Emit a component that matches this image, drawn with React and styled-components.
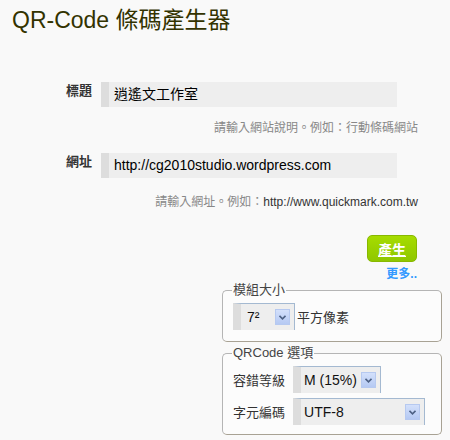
import styled, { createGlobalStyle } from "styled-components";

const GlobalStyle = createGlobalStyle`
  body {
    margin: 0;
    background: #f9f9f9;
    font-family: "Liberation Sans", Arial, "Noto Sans CJK TC", sans-serif;
  }
`;

const Page = styled.div`
  width: 450px;
  height: 440px;
  padding: 6px 8px 0 12px;
  box-sizing: border-box;
  display: flex;
  flex-direction: column;
`;

const Title = styled.h1`
  margin: 0;
  font-size: 23px;
  line-height: 28px;
  font-weight: normal;
  color: #333300;
`;

const Row = styled.div`
  display: flex;
  align-items: flex-start;
  gap: 8px;
  padding-left: 54px;
  margin-top: ${({ $top }) => $top}px;
`;

const Label = styled.label`
  width: 27px;
  font-size: 13px;
  line-height: 18px;
  font-weight: bold;
  color: #333;
`;

const Field = styled.div`
  width: 296px;
  height: 25px;
  box-sizing: border-box;
  background: #eeeeee;
  border-left: 8px solid #dddddd;
  padding-left: 5px;
  font-size: 14px;
  line-height: 25px;
  color: #000;
`;

const Hint = styled.div`
  align-self: flex-end;
  margin-right: 24px;
  margin-top: ${({ $top }) => $top}px;
  font-size: 12px;
  line-height: 16px;
  color: #888;
  span {
    color: #333;
  }
`;

const Actions = styled.div`
  align-self: flex-end;
  margin-right: 25px;
  margin-top: 25px;
  display: flex;
  flex-direction: column;
  align-items: flex-end;
`;

const Button = styled.button`
  width: 50px;
  height: 27px;
  border: 1px solid #88b800;
  border-radius: 5px;
  background: linear-gradient(#a6dc00, #8fc700);
  color: #fff;
  font-family: "Noto Sans CJK TC", sans-serif;
  font-size: 14px;
  font-weight: bold;
  text-decoration: underline;
  padding: 0;
  cursor: pointer;
`;

const More = styled.a`
  margin-top: 5px;
  font-size: 12px;
  line-height: 14px;
  font-weight: bold;
  color: #3399ff;
  text-decoration: none;
`;

const Group = styled.fieldset`
  align-self: flex-end;
  width: 220px;
  box-sizing: border-box;
  margin: ${({ $top }) => $top}px 0 0;
  padding: 5px 9px ${({ $bottom }) => $bottom}px 10px;
  border: 1px solid #b5b5b5;
  border-right-color: #a8a294;
  border-bottom-color: #a8a294;
  border-radius: 5px;
  background: #fcfcfc;
  display: flex;
  flex-direction: column;
  gap: 5px;
`;

const Legend = styled.legend`
  padding: 0 1px;
  margin-left: -1px;
  font-size: 13px;
  line-height: 16px;
  color: #444;
`;

const OptionRow = styled.div`
  display: flex;
  align-items: center;
  gap: ${({ $gap }) => $gap}px;
  font-size: 13px;
  color: #333;
  white-space: nowrap;
`;

const Select = styled.div`
  flex-shrink: 0;
  width: ${({ $w }) => $w}px;
  height: 27px;
  box-sizing: border-box;
  display: flex;
  align-items: center;
  justify-content: space-between;
  background: #eeeeee;
  border-left: 8px solid #dddddd;
  border-top: 1px solid #a4b9d1;
  border-right: 1px solid #a4b9d1;
  padding: 0 4px 0 ${({ $pad }) => $pad}px;
  font-size: 14px;
  color: #111;
  white-space: nowrap;
`;

const Arrow = styled.span`
  flex-shrink: 0;
  width: 15px;
  height: 16px;
  box-sizing: border-box;
  display: flex;
  align-items: center;
  justify-content: center;
  border: 1px solid #b6c9f0;
  background: linear-gradient(#d3e0fb, #b5c9f3);
`;

const Chevron = () => (
  <svg width="7" height="5" viewBox="0 0 7 5">
    <path d="M0.5 0.8 L3.5 3.8 L6.5 0.8" fill="none" stroke="#4d6185" strokeWidth="1.6" />
  </svg>
);

const FakeSelect = ({ value, w, pad = 3 }) => (
  <Select $w={w} $pad={pad}>
    <span>{value}</span>
    <Arrow>
      <Chevron />
    </Arrow>
  </Select>
);

export default function App() {
  return (
    <>
      <GlobalStyle />
      <Page>
        <Title>QR-Code 條碼產生器</Title>

        <Row $top={48}>
          <Label>標題</Label>
          <Field>逍遙文工作室</Field>
        </Row>
        <Hint $top={13}>請輸入網站說明。例如：行動條碼網站</Hint>

        <Row $top={17}>
          <Label>網址</Label>
          <Field>http://cg2010studio.wordpress.com</Field>
        </Row>
        <Hint $top={16}>
          請輸入網址。例如：<span>http://www.quickmark.com.tw</span>
        </Hint>

        <Actions>
          <Button>產生</Button>
          <More href="#">更多..</More>
        </Actions>

        <Group $top={1} $bottom={11}>
          <Legend>模組大小</Legend>
          <OptionRow $gap={2}>
            <FakeSelect value="7²" w={62} pad={6} />
            平方像素
          </OptionRow>
        </Group>

        <Group $top={3} $bottom={9}>
          <Legend>QRCode 選項</Legend>
          <OptionRow $gap={8}>
            容錯等級
            <FakeSelect value="M (15%)" w={88} />
          </OptionRow>
          <OptionRow $gap={8}>
            字元編碼
            <FakeSelect value="UTF-8" w={132} />
          </OptionRow>
        </Group>
      </Page>
    </>
  );
}
